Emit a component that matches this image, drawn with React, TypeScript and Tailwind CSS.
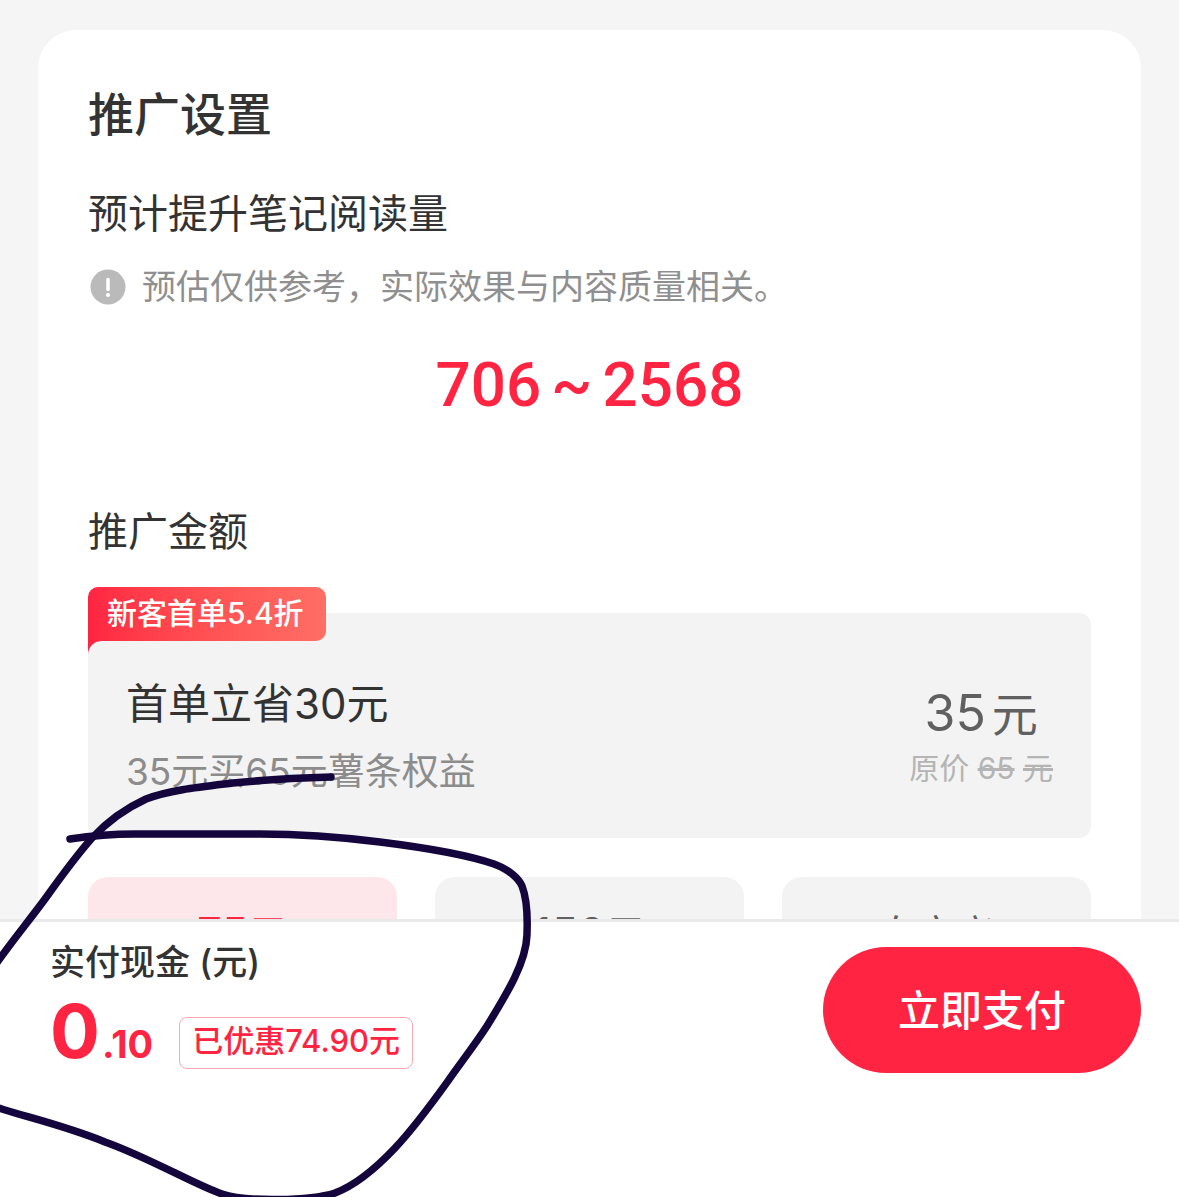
import React, { useState } from 'react';

const amounts = [
  { id: 'a75', value: '75', unit: '元' },
  { id: 'a150', value: '150', unit: '元' },
  { id: 'custom', value: '', unit: '自定义' },
];

const InfoIcon = () => (
  <svg viewBox="0 0 36 36" className="w-9 h-9 shrink-0" aria-hidden="true">
    <circle cx="18" cy="18" r="17.5" fill="#bababa" />
    <path d="M18 10.5v10" stroke="#fff" strokeWidth="3.6" strokeLinecap="round" />
    <circle cx="18" cy="26" r="2.1" fill="#fff" />
  </svg>
);

const Scribble = () => (
  <svg
    viewBox="0 0 1179 1197"
    preserveAspectRatio="xMinYMin slice"
    className="absolute inset-0 w-full h-full pointer-events-none"
    fill="none"
    stroke="#14063c"
    strokeWidth="7.5"
    strokeLinecap="round"
    strokeLinejoin="round"
    aria-hidden="true"
  >
    <path d="M331 777C295 778 262 780 233 783C200 787 170 790 146 799C122 810 107 822 92 838C76 856 60 878 45 899C28 922 12 941 -4 964" />
    <path d="M70 839C90 836 110 834 135 834H260C300 834 340 837 380 842C420 847 465 854 494 864C510 870 519 879 522 886C529 904 527 925 527 935C526 962 508 992 487 1026C474 1046 459 1065 448 1081C430 1106 412 1130 395 1148C378 1166 356 1185 335 1193C310 1201 245 1202 222 1194C195 1185 150 1158 105 1142C60 1124 25 1117 -4 1107" />
  </svg>
);

const App = () => {
  const [selected, setSelected] = useState('a75');

  return (
    <div className="relative h-screen flex flex-col overflow-hidden bg-[#f5f5f5] text-[#333333] font-[Inter,'Noto_Sans_CJK_SC',sans-serif]">
      <main className="flex-1 min-h-0 overflow-hidden px-[38px] pt-[30px]">
        <section className="bg-white rounded-t-[38px] px-[50px] pt-[51px] pb-12">
          <h1 className="text-[46px] leading-[66px] font-medium">推广设置</h1>

          <h2 className="mt-[39px] text-[40px] leading-[56px]">预计提升笔记阅读量</h2>
          <p className="mt-5 pl-0.5 flex items-center gap-4 text-[34px] leading-[50px] text-[#8f8f8f]">
            <InfoIcon />
            预估仅供参考，实际效果与内容质量相关。
          </p>
          <p className="mt-[33px] flex justify-center gap-2.5 text-[62px] leading-[80px] font-medium text-[#ff2442] font-[Roboto,sans-serif]">
            <span>706</span>
            <span>~</span>
            <span>2568</span>
          </p>

          <h2 className="mt-[79px] text-[40px] leading-[56px]">推广金额</h2>
          <div className="relative mt-[53px] flex justify-between rounded-[12px] bg-[#f3f3f3] px-[38px] pb-10">
            <div className="absolute left-0 -top-[26px]">
              <span className="block h-[54px] pl-[19px] pr-[22px] rounded-t-[10px] rounded-br-[10px] bg-linear-to-r from-[#ff2442] to-[#ff6e64] text-[30px] leading-[52px] font-medium text-white">
                新客首单5.4折
              </span>
              <svg viewBox="0 0 14 14" className="block w-3.5 h-3.5" aria-hidden="true">
                <path d="M0 0H14C6 0 0 6 0 14Z" fill="#ff2442" />
              </svg>
            </div>
            <div className="pt-[61px]">
              <h3 className="text-[42px] leading-[60px]">首单立省30元</h3>
              <p className="mt-3 text-[37px] leading-[52px] text-[#8c8c8c]">35元买65元薯条权益</p>
            </div>
            <div className="pt-[70px] text-center">
              <p className="flex items-baseline justify-center gap-1.5 text-[46px] leading-[60px] text-[#606060]">
                <span className="text-[50px]">35</span>
                <span>元</span>
              </p>
              <p className="text-[30px] leading-[48px] text-[#b4b4b4]">
                原价 <del>65</del> <del>元</del>
              </p>
            </div>
          </div>

          <div className="mt-[39px] grid grid-cols-3 gap-[38px]">
            {amounts.map((item) => (
              <button
                key={item.id}
                type="button"
                aria-pressed={selected === item.id}
                onClick={() => setSelected(item.id)}
                className={`h-[115px] rounded-[20px] text-[40px] leading-[60px] ${
                  selected === item.id ? 'bg-[#fee7ea] text-[#ff2442]' : 'bg-[#f3f3f3] text-[#606060]'
                }`}
              >
                {item.value && <span className="text-[44px] leading-none">{item.value}</span>}
                {item.unit}
              </button>
            ))}
          </div>
        </section>
      </main>

      <footer className="flex justify-between items-start border-t-[3px] border-[#e9e9e9] bg-white pl-[50px] pr-[38px] pt-[15px] pb-[124px]">
        <div>
          <p className="text-[35px] leading-[50px] font-medium">实付现金 (元)</p>
          <div className="mt-1 flex items-end">
            <p className="text-[74px] leading-[80px] font-bold text-[#ff2442]">
              0<span className="ml-0.5 text-[38px] leading-none">.10</span>
            </p>
            <span className="ml-[26px] mb-0.5 h-[52px] px-3 border border-[#ffa7b3] rounded-[8px] text-[31px] leading-[46px] font-medium text-[#ff2442]">
              已优惠74.90元
            </span>
          </div>
        </div>
        <button
          type="button"
          className="mt-2.5 h-[126px] px-[75px] rounded-full bg-[#ff2442] text-[42px] font-medium text-white"
        >
          立即支付
        </button>
      </footer>

      <Scribble />
    </div>
  );
};

export default App;
